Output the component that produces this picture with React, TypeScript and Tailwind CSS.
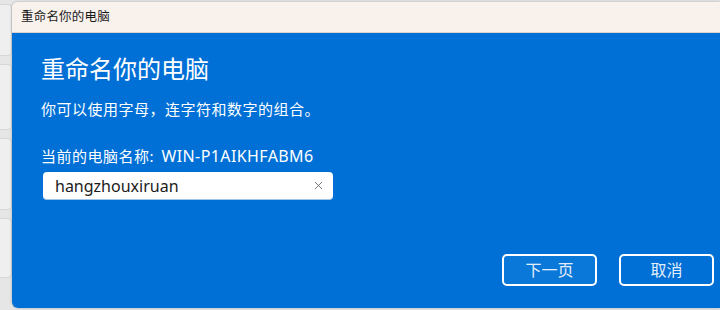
import { X } from "lucide-react";

const font = { fontFamily: '"Segoe UI", "Noto Sans", "Noto Sans CJK SC", sans-serif' };

export default function App() {
  return (
    <div className="flex h-[310px] w-[720px] overflow-hidden bg-[#e6e6e6]" style={font}>
      {/* window behind the dialog */}
      <div className="flex w-[12px] shrink-0 flex-col gap-[8px] pt-[4px]">
        <div className="h-[52px] rounded-r-[4px] border border-l-0 border-[#d6d6d6] bg-[#efefef]" />
        <div className="h-[66px] rounded-r-[4px] border border-l-0 border-[#d6d6d6] bg-[#efefef]" />
        <div className="h-[72px] rounded-r-[4px] border border-l-0 border-[#d6d6d6] bg-[#efefef]" />
        <div className="h-[60px] rounded-r-[4px] border border-l-0 border-[#d6d6d6] bg-[#efefef]" />
      </div>

      <div className="mt-[2px] mb-[2px] flex flex-1 flex-col overflow-hidden rounded-l-[6px] shadow-[0_0_3px_rgba(0,0,0,0.25)]">
        <div className="flex h-[31px] shrink-0 items-center border-b border-[#d8d3cf] bg-[#f8f1ec] pl-[9px] text-[12.5px] tracking-[0.2px] text-[#1a1a1a]">
          重命名你的电脑
        </div>

        <div className="flex flex-1 flex-col bg-[#0070d6] pl-[29px] pr-[6px] text-white">
          <h1 className="mt-[21px] text-[24px] leading-[30px]">重命名你的电脑</h1>
          <p className="mt-[15px] text-[15px] leading-[20px] tracking-[0.5px]">你可以使用字母，连字符和数字的组合。</p>
          <p className="mt-[27px] text-[15px] leading-[20px] tracking-[0.5px]">
            当前的电脑名称: <span className="ml-[3px] text-[16px] tracking-[0.4px]">WIN-P1AIKHFABM6</span>
          </p>
          <div className="mt-[6px] ml-[2px] flex h-[28px] w-[290px] items-center justify-between rounded-[4px] border-b border-[#9fc4ea] bg-white pl-[12px] pr-[8px]">
            <span className="text-[16px] text-[#1b1b1b]">hangzhouxiruan</span>
            <X className="h-[13px] w-[13px] text-[#5c5c5c]" strokeWidth={1.5} />
          </div>

          <div className="mt-auto mb-[22px] flex justify-end gap-[22px]">
            <button className="flex h-[32px] w-[95px] items-center justify-center rounded-[5px] border-2 border-white bg-[#0a78d9] text-[16px] text-[#e4eefa]">
              下一页
            </button>
            <button className="flex h-[32px] w-[95px] items-center justify-center rounded-[5px] border-2 border-white bg-[#0070d6] text-[16px] text-[#e4eefa]">
              取消
            </button>
          </div>
        </div>
      </div>
    </div>
  );
}
